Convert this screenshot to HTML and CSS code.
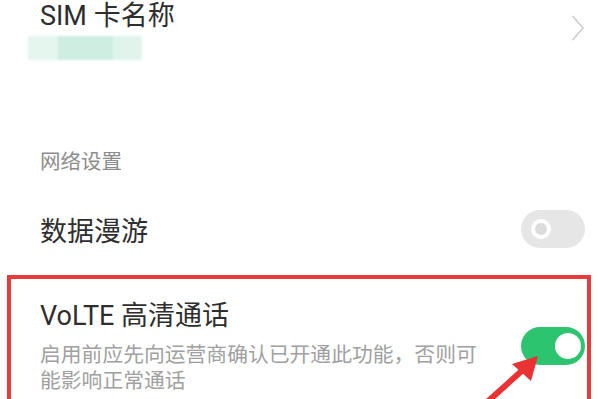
FILE: index.html
```html
<!DOCTYPE html>
<html lang="zh-CN">
<head>
<meta charset="utf-8">
<link rel="stylesheet" href="styles.css">
</head>
<body>
<div class="screen">
  <div class="row sim-row">
    <div class="sim-info">
      <div class="title">SIM 卡名称</div>
      <div class="redacted"></div>
    </div>
    <svg class="chevron" width="14" height="26" viewBox="0 0 14 26">
      <path d="M2 1.5 L12 13 L2 24.5" fill="none" stroke="#cfcfcf" stroke-width="1.8" stroke-linecap="round" stroke-linejoin="round"/>
    </svg>
  </div>

  <div class="section-header">网络设置</div>

  <div class="row roam-row">
    <div class="title">数据漫游</div>
    <span class="switch off"><span class="knob"></span></span>
  </div>

  <div class="highlight">
    <div class="volte-row">
      <div class="volte-text">
        <div class="title">VoLTE 高清通话</div>
        <div class="subtitle">启用前应先向运营商确认已开通此功能，否则可能影响正常通话</div>
      </div>
      <span class="switch on"><span class="knob"></span></span>
    </div>
  </div>

  <svg class="arrow" width="80" height="59" viewBox="0 0 80 59">
    <line x1="15" y1="64" x2="56" y2="27" stroke="#ea3232" stroke-width="6"/>
    <polygon points="68,16 42,24 61,41" fill="#ea3232"/>
  </svg>
</div>
</body>
</html>
```

FILE: styles.css
```css
html, body {
  margin: 0;
  padding: 0;
  background: #ffffff;
}

body {
  width: 598px;
  height: 399px;
  overflow: hidden;
  font-family: Roboto, "Noto Sans CJK SC", sans-serif;
}

.screen {
  position: relative;
  height: 399px;
  overflow: hidden;
}

.row {
  display: flex;
  align-items: center;
  justify-content: space-between;
  padding: 0 13px 0 40px;
}

.title {
  font-size: 27px;
  line-height: 36px;
  color: #2e2e2e;
}

.sim-row {
  margin-top: -2px;
  align-items: flex-start;
}

.sim-info {
  display: flex;
  flex-direction: column;
}

.redacted {
  margin: 2px 0 0 -12px;
  width: 114px;
  height: 24px;
  background: linear-gradient(90deg, #e4f6ee 0, #e4f6ee 26%, #cdeee0 26%, #cdeee0 75%, #e0f4ec 75%, #e0f4ec 100%);
  filter: blur(1px);
}

.chevron {
  margin-top: 17px;
}

.section-header {
  margin-top: 88px;
  padding-left: 40px;
  font-size: 20.5px;
  line-height: 28px;
  color: #8c8c8c;
}

.roam-row {
  margin-top: 34px;
  height: 38px;
}

.roam-row .title {
  margin-top: 5px;
}

.switch {
  position: relative;
  display: inline-flex;
  align-items: center;
  flex: none;
  width: 64px;
  height: 38px;
  border-radius: 19px;
  box-sizing: border-box;
}

.switch.off {
  background: #e6e6e6;
  padding-left: 10px;
}

.switch.off .knob {
  width: 20px;
  height: 20px;
  box-sizing: border-box;
  border-radius: 50%;
  border: 4px solid #ffffff;
  background: #dcdcdc;
}

.switch.on {
  background: #2cc46f;
  justify-content: flex-end;
  padding-right: 4px;
}

.switch.on .knob {
  width: 26px;
  height: 26px;
  border-radius: 50%;
  background: #ffffff;
}

.highlight {
  margin: 27px 7px 0 7px;
  border: 4px solid #e8393b;
  border-bottom: none;
  padding: 19px 2px 5px 29px;
}

.volte-row {
  display: flex;
  align-items: center;
}

.volte-text {
  flex: 1;
  margin-right: 30px;
}

.subtitle {
  margin-top: 8px;
  font-size: 20.8px;
  line-height: 26px;
  color: #a0a0a0;
}

.arrow {
  position: absolute;
  left: 470px;
  top: 340px;
}
```
